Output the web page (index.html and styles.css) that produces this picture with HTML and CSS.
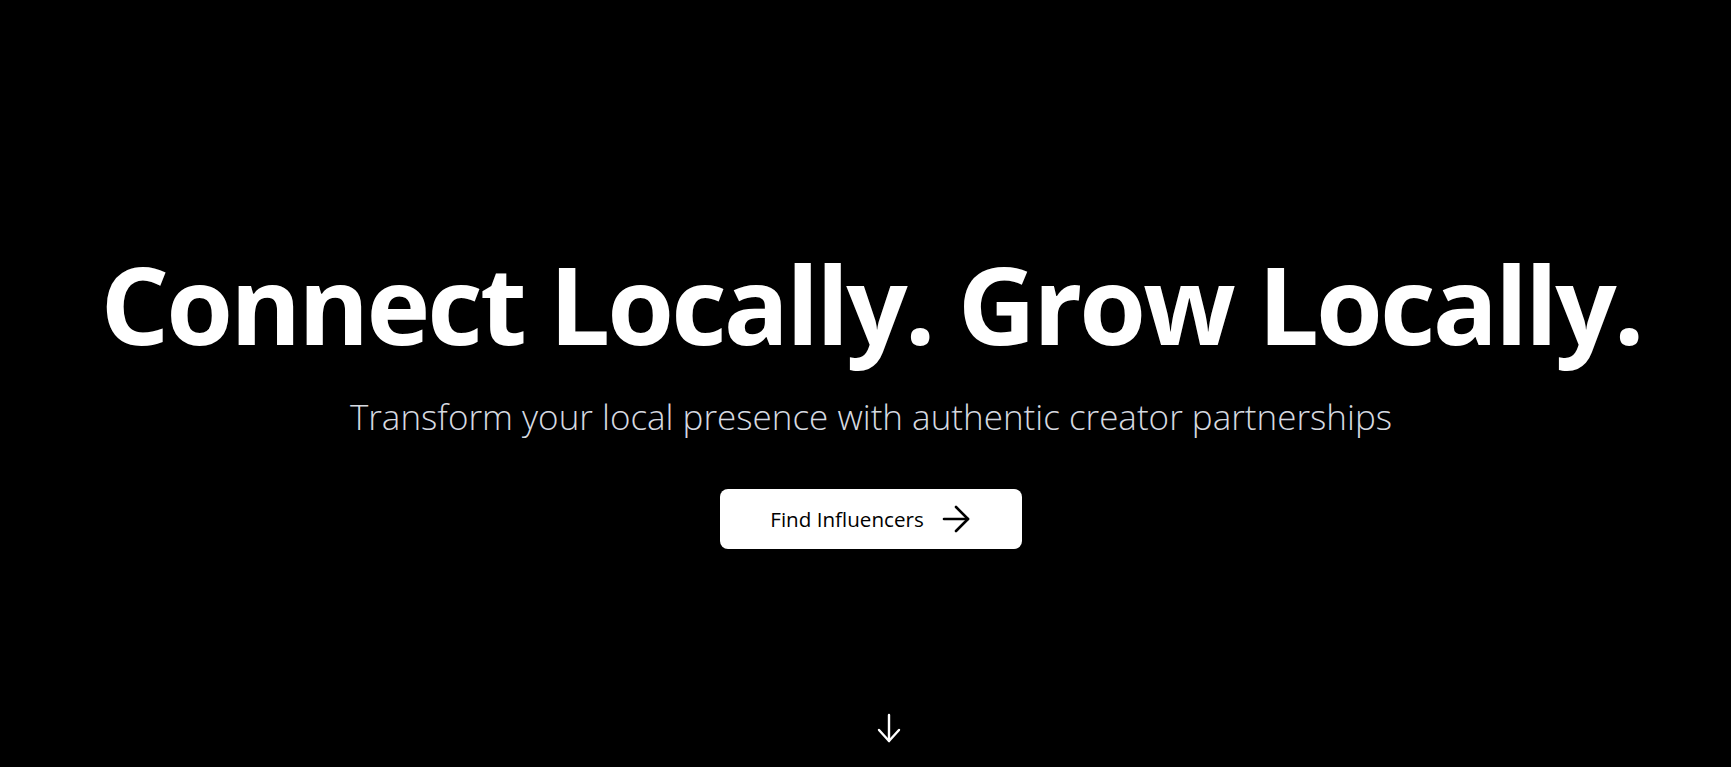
FILE: index.html
```html
<!DOCTYPE html>
<html lang="en">
<head>
<meta charset="utf-8">
<title>Connect Locally</title>
<link rel="stylesheet" href="styles.css">
</head>
<body>
<main class="hero">
  <div class="hero-content">
    <h1 class="title">Connect Locally. Grow Locally.</h1>
    <p class="subtitle">Transform your local presence with authentic creator partnerships</p>
    <a class="cta" href="#">
      <span class="cta-label">Find Influencers</span>
      <svg class="cta-icon" width="28" height="28" viewBox="0 0 28 28" fill="none" stroke="currentColor" stroke-width="2.6" stroke-linecap="round" stroke-linejoin="round" aria-hidden="true">
        <path d="M2 14h24"/>
        <path d="M14 2l12 12-12 12"/>
      </svg>
    </a>
  </div>
  <div class="scroll-cue" aria-hidden="true">
    <svg width="24" height="30" viewBox="0 0 24 30" fill="none" stroke="currentColor" stroke-width="2.4" stroke-linecap="round" stroke-linejoin="round">
      <path d="M12 2v26"/>
      <path d="M2 17l10 11 10-11"/>
    </svg>
  </div>
</main>
</body>
</html>
```

FILE: styles.css
```css
* {
  box-sizing: border-box;
}

html, body {
  margin: 0;
  padding: 0;
  background: #000;
}

body {
  font-family: "Open Sans", "Noto Sans", "DejaVu Sans", sans-serif;
  color: #fff;
}

.hero {
  position: relative;
  height: 767px;
  display: flex;
  align-items: center;
  justify-content: center;
  padding-top: 31px;
  padding-left: 11px;
}

.hero-content {
  display: flex;
  flex-direction: column;
  align-items: center;
  text-align: center;
}

.title {
  margin: 0;
  font-size: 108px;
  line-height: 108px;
  font-weight: 700;
  letter-spacing: -2.9px;
  color: #fff;
  white-space: nowrap;
}

.subtitle {
  margin: 39px 0 0;
  font-size: 35px;
  line-height: 40px;
  font-weight: 300;
  color: #d6dae0;
  white-space: nowrap;
}

.cta {
  margin-top: 52px;
  height: 60px;
  display: inline-flex;
  align-items: center;
  gap: 18px;
  padding: 0 52px 0 50px;
  background: #fff;
  color: #000;
  border-radius: 8px;
  text-decoration: none;
  font-size: 20.6px;
  font-weight: 500;
}

.cta-icon {
  display: block;
}

.scroll-cue {
  position: absolute;
  left: 50%;
  bottom: 24px;
  margin-left: 11px;
  color: #fff;
}

.scroll-cue svg {
  display: block;
}
```
